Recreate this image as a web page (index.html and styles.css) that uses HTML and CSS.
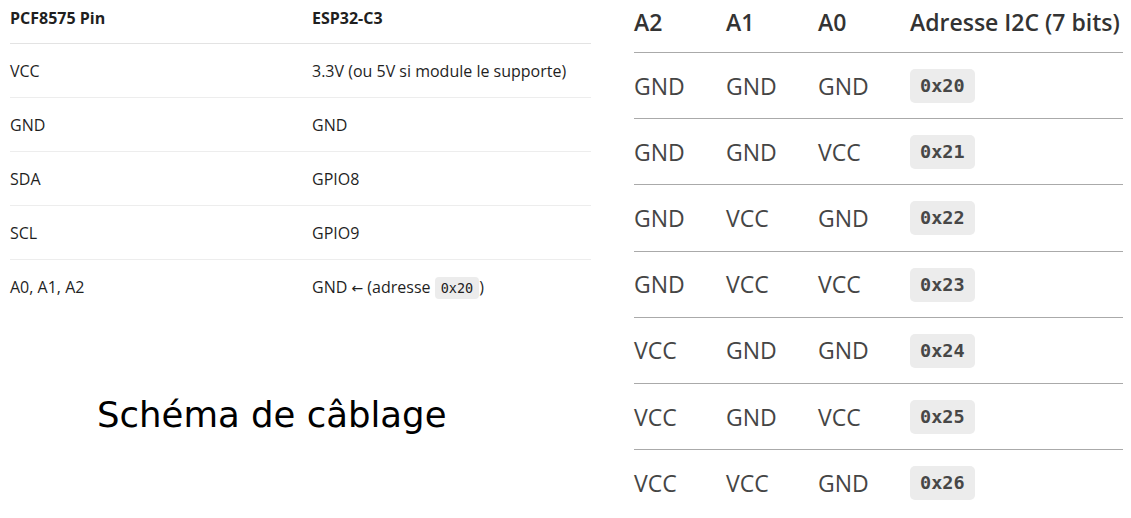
FILE: index.html
```html
<!DOCTYPE html>
<html lang="fr">
<head>
<meta charset="utf-8">
<title>PCF8575</title>
<link rel="stylesheet" href="styles.css">
</head>
<body>
<div class="page">
  <section class="left">
    <table class="pins">
      <thead>
        <tr><th class="c1">PCF8575 Pin</th><th>ESP32-C3</th></tr>
      </thead>
      <tbody>
        <tr><td class="c1">VCC</td><td>3.3V (ou 5V si module le supporte)</td></tr>
        <tr><td class="c1">GND</td><td>GND</td></tr>
        <tr><td class="c1">SDA</td><td>GPIO8</td></tr>
        <tr><td class="c1">SCL</td><td>GPIO9</td></tr>
        <tr class="last"><td class="c1">A0, A1, A2</td><td>GND <span class="arrow">←</span> (adresse <code class="sm">0x20</code>)</td></tr>
      </tbody>
    </table>
    <h2 class="schema">Schéma de câblage</h2>
  </section>
  <section class="right">
    <table class="addr">
      <thead>
        <tr><th class="n">A2</th><th class="n">A1</th><th class="n">A0</th><th>Adresse I2C (7 bits)</th></tr>
      </thead>
      <tbody>
        <tr><td>GND</td><td>GND</td><td>GND</td><td><code class="lg">0x20</code></td></tr>
        <tr><td>GND</td><td>GND</td><td>VCC</td><td><code class="lg">0x21</code></td></tr>
        <tr><td>GND</td><td>VCC</td><td>GND</td><td><code class="lg">0x22</code></td></tr>
        <tr><td>GND</td><td>VCC</td><td>VCC</td><td><code class="lg">0x23</code></td></tr>
        <tr><td>VCC</td><td>GND</td><td>GND</td><td><code class="lg">0x24</code></td></tr>
        <tr><td>VCC</td><td>GND</td><td>VCC</td><td><code class="lg">0x25</code></td></tr>
        <tr><td>VCC</td><td>VCC</td><td>GND</td><td><code class="lg">0x26</code></td></tr>
      </tbody>
    </table>
  </section>
</div>
</body>
</html>
```
FILE: styles.css
```css
html, body {
  margin: 0;
  padding: 0;
  background: #ffffff;
}
.page {
  display: flex;
  width: 1131px;
  height: 518px;
  overflow: hidden;
}
.left {
  width: 581px;
  padding-left: 10px;
  flex: none;
}
.right {
  width: 489px;
  margin-left: 43px;
  flex: none;
}
table {
  border-collapse: collapse;
  width: 100%;
}
.pins {
  font-family: "Open Sans", "Noto Sans", sans-serif;
  font-size: 16px;
  color: #1f1f1f;
}
.pins th {
  text-align: left;
  font-weight: 700;
  line-height: 22px;
  padding: 7px 0 14px 0;
  border-bottom: 1px solid #e3e3e3;
}
.pins td {
  line-height: 22px;
  padding: 15.5px 0 15.5px 0;
  border-bottom: 1px solid #ededed;
}
.pins .last td {
  border-bottom: none;
}
.pins .c1 {
  width: 302px;
}
.arrow {
  font-family: "DejaVu Sans", sans-serif;
  font-size: 14px;
}
code.sm {
  font-family: "DejaVu Sans Mono", monospace;
  font-size: 13.5px;
  background: #ececec;
  border-radius: 4px;
  padding: 3px 6px;
  color: #222;
}
.schema {
  font-family: "DejaVu Sans", Verdana, sans-serif;
  font-weight: 400;
  font-size: 35.5px;
  color: #000;
  margin: 80px 0 0 87px;
}
.addr {
  font-family: "Open Sans", "Noto Sans", sans-serif;
  font-size: 23px;
  color: #454545;
}
.addr th {
  text-align: left;
  font-weight: 600;
  color: #333;
  line-height: 30px;
  padding: 7px 0 15px 0;
  border-bottom: 1px solid #aaaaaa;
}
.addr th.n {
  width: 92px;
}
.addr td {
  line-height: 30px;
  height: 34px;
  padding: 15.2px 0 15.2px 0;
  border-bottom: 1px solid #aaaaaa;
  vertical-align: middle;
}
.addr tbody tr:last-child td {
  border-bottom: none;
}
code.lg {
  display: inline-block;
  font-family: "DejaVu Sans Mono", monospace;
  font-size: 18.5px;
  font-weight: 700;
  color: #474747;
  background: #ececec;
  border-radius: 5px;
  line-height: 24px;
  padding: 5px 10px;
  vertical-align: middle;
}
```
